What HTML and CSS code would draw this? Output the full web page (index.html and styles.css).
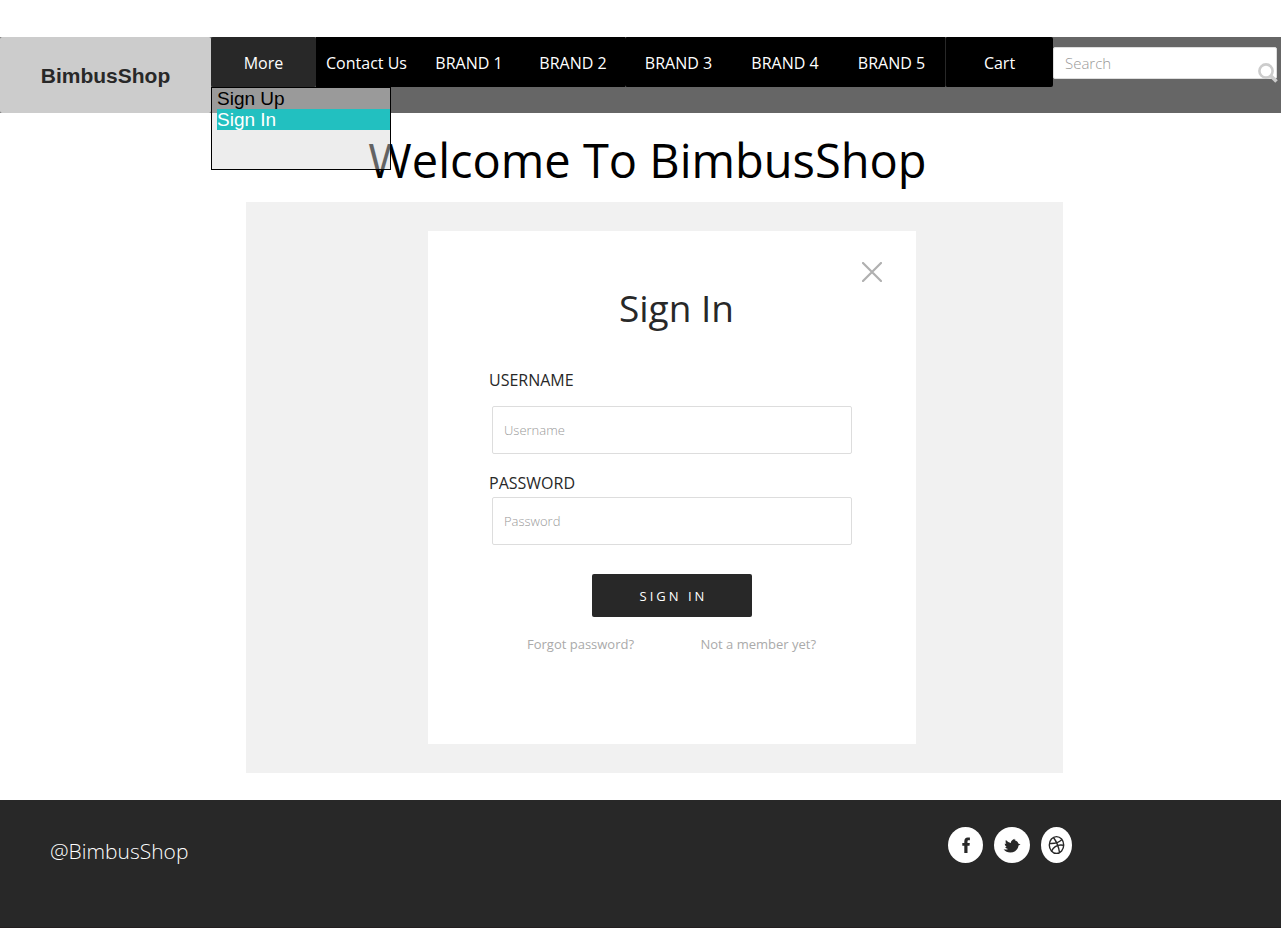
FILE: index.html
```html
<!DOCTYPE html>
<html lang="en">
<head>
<meta charset="utf-8">
<title>BimbusShop</title>
<link rel="stylesheet" href="styles.css">
</head>
<body>
<header class="header">
  <a class="logo" href="#">BimbusShop</a>
  <nav class="nav">
    <div class="menu">
      <button class="nav-item menu-button" type="button">More</button>
      <div class="dropdown">
        <a class="option" href="#">Sign Up</a>
        <a class="option option-active" href="#">Sign In</a>
      </div>
    </div>
    <a class="nav-item" href="#">Contact Us</a>
    <a class="nav-item" href="#">BRAND 1</a>
    <a class="nav-item" href="#">BRAND 2</a>
    <a class="nav-item brand-start" href="#">BRAND 3</a>
    <a class="nav-item" href="#">BRAND 4</a>
    <a class="nav-item" href="#">BRAND 5</a>
    <a class="nav-item cart" href="#">Cart</a>
  </nav>
  <form class="search">
    <input class="search-input" type="search" placeholder="Search" aria-label="Search">
    <svg class="search-icon" viewBox="0 0 20 20" aria-hidden="true"><circle cx="8" cy="8" r="6.6" fill="none" stroke="#ccc" stroke-width="2.6"/><path d="M13 13l5.500 5.500" stroke="#ccc" stroke-width="3.500"/></svg>
  </form>
</header>
<main class="main">
  <h1 class="title">Welcome To BimbusShop</h1>
  <section class="panel">
    <form class="card">
      <button class="close" type="button" aria-label="Close"><svg viewBox="0 0 20 20" width="20" height="20"><path d="M1 1l18 18M19 1L1 19" stroke="#b0b0b0" stroke-width="2.200" stroke-linecap="round"/></svg></button>
      <h2 class="card-title">Sign In</h2>
      <label class="label" for="username">USERNAME</label>
      <input class="field field-username" id="username" type="text" placeholder="Username">
      <label class="label" for="password">PASSWORD</label>
      <input class="field" id="password" type="password" placeholder="Password">
      <button class="submit" type="submit">SIGN IN</button>
      <div class="links">
        <a class="link" href="#">Forgot password?</a>
        <a class="link" href="#">Not a member yet?</a>
      </div>
    </form>
  </section>
</main>
<footer class="footer">
  <p class="handle">@BimbusShop</p>
  <div class="social">
    <a href="#" aria-label="Facebook"><svg width="35" height="36" viewBox="0 0 35 36"><ellipse cx="17.500" cy="18" rx="17.500" ry="18" fill="#fff"/><path d="M16.300 26v-7.300h-2v-2.700h2v-1.600c0-2.500 1.300-3.800 3.400-3.800h2.200v2.700h-1.300c-.8 0-1.100.4-1.100 1.200v1.500h2.300l-.3 2.700h-2V26z" fill="#282828"/></svg></a>
    <a href="#" aria-label="Twitter"><svg width="36" height="36" viewBox="0 0 36 36"><ellipse cx="18" cy="18" rx="18" ry="18" fill="#fff"/><path d="M9.600 22.300c1.800.5 3.400.3 4.500-.4-1.500-.2-2.500-.9-2.900-2l1.400-.2c-1.300-.8-1.900-1.800-1.800-3.200l1.500.5c-.8-1.100-.9-2.600-.4-4 1.500 1.600 3 2.600 4.900 3 .1-1.900 1.600-3.300 3.900-4.200l-.3 1.100 1.200-.5-.6 1c1.700.3 2.800 1.400 3.300 3.100l2.200.9-2 1c-.5 4.300-3.700 7.200-8.300 7.200-2.600 0-4.900-1-6.600-3.300z" fill="#282828"/></svg></a>
    <a href="#" aria-label="Dribbble"><svg width="31" height="36" viewBox="0 0 31 36"><ellipse cx="15.500" cy="18" rx="15.500" ry="18" fill="#fff"/><g fill="none" stroke="#282828" stroke-width="1.400"><ellipse cx="15.500" cy="18" rx="7.200" ry="8.400"/><path d="M12.500 10.500q5 7 6 15M8.500 16.500q8 .5 12.500-4M10.500 24.200q3.500-7.500 12-6"/></g></svg></a>
  </div>
</footer>
</body>
</html>
```
FILE: styles.css
```css
* { box-sizing: border-box; }
body {
  margin: 0;
  padding-top: 37px;
  min-height: 100vh;
  display: flex;
  flex-direction: column;
  background: #fff;
  color: #282828;
  font-family: "Open Sans", "Liberation Sans", sans-serif;
}
a { color: inherit; text-decoration: none; }
button, input { font-family: inherit; }
.header {
  display: grid;
  grid-template-columns: 211fr 842fr 228fr;
  min-height: 76px;
  background: #666;
}
.logo {
  display: flex;
  align-items: center;
  justify-content: center;
  padding-top: 2px;
  border-radius: 2px;
  background: #ccc;
  font: bold 21px "Liberation Sans", Arial, sans-serif;
}
.nav {
  display: grid;
  grid-template-columns: 105fr 101fr 104fr 104fr 107fr 106fr 107fr 108fr;
  align-self: start;
  height: 50px;
}
.nav-item {
  display: flex;
  align-items: center;
  justify-content: center;
  background: #000;
  color: #fff;
  font-size: 16px;
  line-height: 20px;
  white-space: nowrap;
  padding: 2px 0 0;
}
.brand-start { border-radius: 2px 0 0 2px; }
.cart { border-left: 1px solid #282828; border-radius: 2px; }
.menu { position: relative; display: flex; }
.menu-button { flex: 1; border: 0; border-radius: 2px; background: #282828; }
.dropdown {
  position: absolute;
  z-index: 1;
  top: 100%;
  left: 0;
  width: 180px;
  height: 83px;
  padding-left: 5px;
  border: 1px solid #000;
  background: rgba(216, 216, 216, .46);
}
.option {
  display: block;
  color: #000;
  font: 19px/21px "Liberation Sans", Arial, sans-serif;
}
.option-active { background: #22c0c0; color: #fff; }
.search { position: relative; padding: 10px 4px 0 0; align-self: start; }
.search-input {
  display: block;
  width: 100%;
  height: 32px;
  padding: 0 11px;
  border: 1px solid #ddd;
  border-radius: 2px;
  background: #fff;
  font-size: 15px;
  font-weight: 300;
}
.search-input::placeholder, .field::placeholder { color: #999; opacity: 1; }
.search-icon { position: absolute; right: 3px; bottom: -4px; width: 20px; height: 20px; }
.main { flex: 1; display: flex; flex-direction: column; padding-left: 27px; }
.title {
  margin: 15px 0 0;
  padding-right: 13px;
  color: #000;
  font-size: 47px;
  font-weight: 400;
  line-height: 65px;
  text-align: center;
}
.panel {
  width: 817px;
  max-width: 100%;
  margin: 9px auto 27px;
  padding: 29px 0 29px 36px;
  background: #f1f1f1;
}
.card {
  width: 488px;
  max-width: 100%;
  min-height: 513px;
  margin: 0 auto;
  padding: 31px 64px 64px 61px;
  display: flex;
  flex-direction: column;
  background: #fff;
}
.close {
  align-self: flex-end;
  margin-right: -30px;
  padding: 0;
  border: 0;
  background: none;
  line-height: 0;
}
.card-title {
  margin: 0;
  padding-left: 12px;
  font-size: 37px;
  font-weight: 400;
  line-height: 52px;
  text-align: center;
}
.label { margin-top: 34px; font-size: 16px; line-height: 24px; }
.field {
  height: 48px;
  margin: 2px 0 0 3px;
  padding: 0 11px;
  border: 1px solid #ddd;
  border-radius: 2px;
  font-size: 13px;
  font-weight: 300;
}
.field-username { margin-top: 14px; }
.field-username + .label { margin-top: 17px; }
.submit {
  width: 160px;
  height: 43px;
  margin: 29px 0 0 103px;
  padding: 0 0 0 3px;
  border: 0;
  border-radius: 2px;
  background: #282828;
  color: #fff;
  font-size: 13px;
  letter-spacing: 3px;
}
.links {
  display: flex;
  justify-content: space-between;
  margin-top: 17px;
  padding: 0 36px 0 38px;
}
.link { color: #aaa; font-size: 13px; line-height: 20px; }
.footer {
  display: flex;
  justify-content: space-between;
  align-items: flex-start;
  min-height: 128px;
  padding: 27px 209px 0 50px;
  border-bottom: 1px solid #231f20;
  background: #282828;
  color: #fff;
}
.handle { margin: 10px 0 0; font-size: 21px; font-weight: 300; line-height: 29px; }
.social { display: flex; gap: 11px; }
.social svg { display: block; }
```
